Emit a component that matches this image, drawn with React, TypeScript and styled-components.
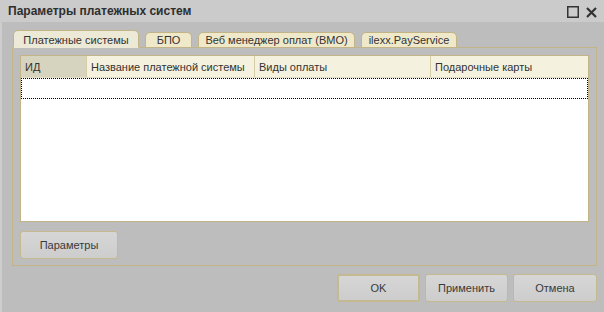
import React from "react";
import styled, { createGlobalStyle } from "styled-components";

const Global = createGlobalStyle`
  html, body { margin: 0; padding: 0; }
  body { background: #bdbdbd; font-family: "Liberation Sans", Arial, sans-serif; font-size: 11px; }
`;

const Window = styled.div`
  width: 604px;
  height: 312px;
  background: #bdbdbd;
  border-left: 2px solid #cdcdcd;
  box-sizing: border-box;
  display: flex;
  flex-direction: column;
`;

const TitleBar = styled.div`
  height: 22px;
  background: #cbcbcb;
  display: flex;
  align-items: center;
  margin-left: -2px;
  padding: 0 7px 0 8px;
`;

const Title = styled.div`
  flex: 1;
  font-weight: bold;
  font-size: 12px;
  color: #2e2e2e;
`;

const TitleIcons = styled.div`
  display: flex;
  gap: 7px;
  align-items: center;
  padding-top: 2px;
`;

const Content = styled.div`
  flex: 1;
  display: flex;
  flex-direction: column;
  padding: 8px 6px 0 10px;
`;

const TabStrip = styled.div`
  display: flex;
  align-items: flex-end;
  gap: 6px;
  height: 18px;
  padding-left: 1px;
  position: relative;
  z-index: 1;
  margin-bottom: -1px;
`;

const Tab = styled.div<{ $active?: boolean; $w: number }>`
  width: ${(p) => p.$w}px;
  height: ${(p) => (p.$active ? 18 : 16)}px;
  box-sizing: border-box;
  border: 1px solid #c2b487;
  border-bottom: ${(p) => (p.$active ? "1px solid #ece9d6" : "1px solid #c2b487")};
  border-radius: 5px 5px 0 0;
  background: ${(p) => (p.$active ? "#ece9d6" : "#efe8c9")};
  color: #333;
  font-size: 11px;
  display: flex;
  align-items: center;
  justify-content: center;
  padding-top: ${(p) => (p.$active ? 1 : 0)}px;
  white-space: nowrap;
`;

const Panel = styled.div`
  width: 585px;
  height: 219px;
  box-sizing: border-box;
  border: 1px solid #c2b487;
  display: flex;
  flex-direction: column;
  padding: 7px 7px 6px 7px;
  gap: 9px;
`;

const Grid = styled.div`
  flex: 1;
  background: #fff;
  border: 1px solid #c2b487;
  display: flex;
  flex-direction: column;
`;

const HeaderRow = styled.div`
  display: grid;
  grid-template-columns: 66px 168px 176px 1fr;
  height: 21px;
  background: #f4f1de;
  border-bottom: 1px solid #e4dfc4;
`;

const HeaderCell = styled.div<{ $dark?: boolean }>`
  display: flex;
  align-items: center;
  padding-left: 4px;
  color: #333;
  font-size: 11px;
  background: ${(p) => (p.$dark ? "#d6d3bf" : "transparent")};
  border-right: 1px solid #d4cca6;
  white-space: nowrap;
  overflow: hidden;
  &:last-child { border-right: none; }
`;

const SelectedRow = styled.div`
  height: 21px;
  box-sizing: border-box;
  border: 1px dotted #000;
`;

const Button = styled.div<{ $w: number; $default?: boolean }>`
  width: ${(p) => p.$w}px;
  height: 28px;
  box-sizing: border-box;
  border: ${(p) => (p.$default ? "2px" : "1px")} solid #c5b98f;
  border-radius: 3px;
  background: linear-gradient(#d6d6d6, #cdcdcd);
  display: flex;
  align-items: center;
  justify-content: center;
  color: #3a3a3a;
  font-size: 11px;
`;

const Footer = styled.div`
  display: flex;
  justify-content: flex-end;
  gap: 5px;
  padding-top: 8px;
  width: 585px;
`;

export default function App() {
  return (
    <>
      <Global />
      <Window>
        <TitleBar>
          <Title>Параметры платежных систем</Title>
          <TitleIcons>
            <svg width="12" height="12" viewBox="0 0 12 12">
              <rect x="0.75" y="0.75" width="10.5" height="10.5" fill="none" stroke="#333" strokeWidth="1.5" />
            </svg>
            <svg width="11" height="11" viewBox="0 0 11 11">
              <path d="M1 1 L10 10 M10 1 L1 10" stroke="#333" strokeWidth="2.2" />
            </svg>
          </TitleIcons>
        </TitleBar>
        <Content>
          <TabStrip>
            <Tab $active $w={126}>Платежные системы</Tab>
            <Tab $w={47}>БПО</Tab>
            <Tab $w={157}>Веб менеджер оплат (ВМО)</Tab>
            <Tab $w={96}>ilexx.PayService</Tab>
          </TabStrip>
          <Panel>
            <Grid>
              <HeaderRow>
                <HeaderCell $dark>ИД</HeaderCell>
                <HeaderCell>Название платежной системы</HeaderCell>
                <HeaderCell>Виды оплаты</HeaderCell>
                <HeaderCell>Подарочные карты</HeaderCell>
              </HeaderRow>
              <SelectedRow />
            </Grid>
            <Button $w={98}>Параметры</Button>
          </Panel>
          <Footer>
            <Button $w={83} $default>OK</Button>
            <Button $w={83}>Применить</Button>
            <Button $w={84}>Отмена</Button>
          </Footer>
        </Content>
      </Window>
    </>
  );
}
